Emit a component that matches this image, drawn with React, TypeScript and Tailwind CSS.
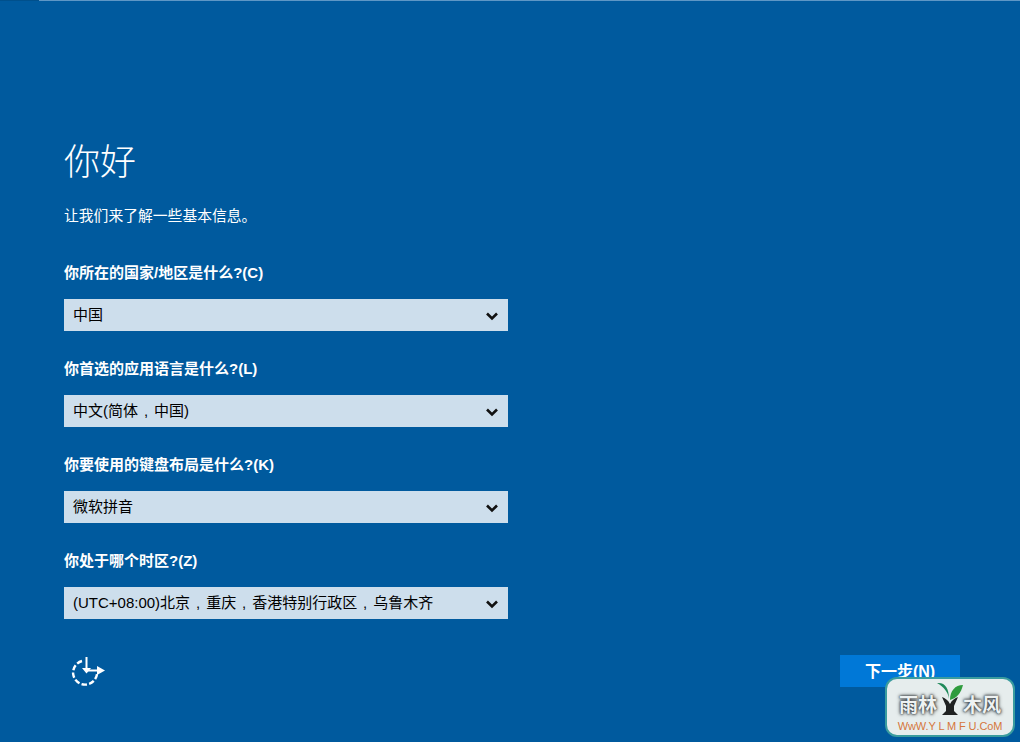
import type { ReactNode } from 'react'

const cjk = 'font-["Liberation_Sans","Noto_Sans_CJK_SC",sans-serif]'

// the screenshot's full-width comma sits centred in its cell, near the baseline
function Comma() {
  return <span className="inline-block w-[16px] text-center">,</span>
}

const fields: { label: string; value: ReactNode }[] = [
  { label: '你所在的国家/地区是什么?(C)', value: '中国' },
  { label: '你首选的应用语言是什么?(L)', value: <>中文(简体<Comma />中国)</> },
  { label: '你要使用的键盘布局是什么?(K)', value: '微软拼音' },
  {
    label: '你处于哪个时区?(Z)',
    value: <>(UTC+08:00)北京<Comma />重庆<Comma />香港特别行政区<Comma />乌鲁木齐</>,
  },
]

function Chevron() {
  return (
    <svg width="12" height="9" viewBox="0 0 12 9" fill="none" stroke="#111" strokeWidth="2.6" className="mt-[3px]">
      <path d="M1 1.5l5 5 5-5" />
    </svg>
  )
}

function Field({ label, value }: { label: string; value: ReactNode }) {
  return (
    <div className="h-[96px]">
      <div className="h-[32px] text-[15px] leading-[20px] font-bold text-white">{label}</div>
      <div className="mt-[4px] flex h-[32px] w-[444px] items-center justify-between bg-[#cddeec] pr-[10px] pl-[9px] text-[15px] text-black">
        <span>{value}</span>
        <Chevron />
      </div>
    </div>
  )
}

// dashed ring with a down arrow and a right arrow
function SetupIcon() {
  return (
    <svg width="36" height="32" viewBox="0 0 36 32" fill="none" stroke="white" strokeWidth="2.4">
      <path d="M12 5A12 12 0 1 0 27 18" strokeDasharray="5.5 2.2" />
      <path d="M16.5 1v13" strokeWidth="2" />
      <path d="M12 12h9l-4.500 5.500z" fill="white" stroke="none" />
      <path d="M17 14.500h11" strokeWidth="2" />
      <path d="M27 10v9l8-4.500z" fill="white" stroke="none" />
    </svg>
  )
}

function Watermark() {
  return (
    <div className="absolute top-[677px] left-[885px] flex h-[60px] w-[130px] flex-col items-center rounded-[12px] border-2 border-[#3a9c9e] bg-[#e6eded]">
      <div className="mt-[15px] flex items-center text-[19px] leading-[24px] font-bold text-[#eef2f2] [text-shadow:0_0_2px_#3f4447,0_0_3px_#3f4447,0_0_4px_#5a6063]">
        <span>雨林</span>
        <svg width="26" height="38" viewBox="0 0 26 38" className="-mt-[16px]">
          <path d="M5 18c3 1 6 3 8 7 2-4 5-6 8-7l-4 9v5l4 4H5l4-4v-5z" fill="#1f2222" />
          <path d="M12 20C11 13 7 8 0 4c8-1 12 5 12 16z" fill="#1f8a5a" />
          <path d="M13 21c0-9 5-15 13-15-2 8-6 13-13 15z" fill="#2f9c3e" />
        </svg>
        <span>木风</span>
      </div>
      <div className="mt-[2px] text-[11px] leading-[12px] tracking-[-0.1px] text-[#d5763c]">WwW.Y L M F U.CoM</div>
    </div>
  )
}

export default function App() {
  return (
    <div className={`relative h-[742px] w-[1020px] overflow-hidden bg-[#005a9e] ${cjk}`}>
      <div className="flex h-px w-full">
        <div className="w-[39px] bg-[#00508c]" />
        <div className="flex-1 bg-[#5e97c6]" />
      </div>
      <div className="pt-[140px] pl-[64px]">
        <h1 className="text-[36px] leading-[44px] font-light text-white">你好</h1>
        <p className="mt-[21px] text-[14.8px] leading-[20px] text-white">让我们来了解一些基本信息。</p>
        <div className="mt-[37px]">
          {fields.map((f) => (
            <Field key={f.label} label={f.label} value={f.value} />
          ))}
        </div>
        <div className="mt-[8px] flex items-start justify-between pr-[60px]">
          <div className="mt-px ml-[6px]">
            <SetupIcon />
          </div>
          <button className="h-[32px] w-[120px] bg-[#0078d7] pt-[2px] text-[16px] font-bold text-white">下一步(N)</button>
        </div>
      </div>
      <Watermark />
    </div>
  )
}
